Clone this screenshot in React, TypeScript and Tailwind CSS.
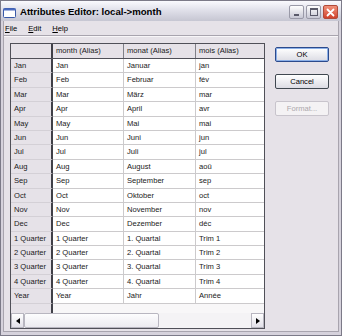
const rows = [
  ["Jan", "Jan", "Januar", "jan"],
  ["Feb", "Feb", "Februar", "fév"],
  ["Mar", "Mar", "März", "mar"],
  ["Apr", "Apr", "April", "avr"],
  ["May", "May", "Mai", "mai"],
  ["Jun", "Jun", "Juni", "jun"],
  ["Jul", "Jul", "Juli", "jul"],
  ["Aug", "Aug", "August", "aoû"],
  ["Sep", "Sep", "September", "sep"],
  ["Oct", "Oct", "Oktober", "oct"],
  ["Nov", "Nov", "November", "nov"],
  ["Dec", "Dec", "Dezember", "déc"],
  ["1 Quarter", "1 Quarter", "1. Quartal", "Trim 1"],
  ["2 Quarter", "2 Quarter", "2. Quartal", "Trim 2"],
  ["3 Quarter", "3 Quarter", "3. Quartal", "Trim 3"],
  ["4 Quarter", "4 Quarter", "4. Quartal", "Trim 4"],
  ["Year", "Year", "Jahr", "Année"],
]

function TitleButton({ kind }: { kind: "min" | "max" | "close" }) {
  if (kind === "close") {
    return (
      <div className="flex h-[14px] w-[15px] items-center justify-center rounded-[2px] border border-[#b04a3a] bg-gradient-to-b from-[#f0907a] to-[#d0402a]">
        <svg width="9" height="9" viewBox="0 0 9 9">
          <path d="M1.5 1.5l6 6M7.5 1.5l-6 6" stroke="#fff" strokeWidth="1.8" strokeLinecap="round" />
        </svg>
      </div>
    )
  }
  return (
    <div className="flex h-[14px] w-[15px] items-center justify-center rounded-[2px] border border-[#9a9aa8] bg-gradient-to-b from-[#ffffff] to-[#c8c8d4]">
      {kind === "min" ? (
        <div className="mt-[6px] h-[2px] w-[5px] bg-[#5a5a6a]" />
      ) : (
        <div className="h-[8px] w-[8px] border border-t-2 border-[#5a5a6a]" />
      )}
    </div>
  )
}

function Button({ label, primary, disabled }: { label: string; primary?: boolean; disabled?: boolean }) {
  return (
    <div
      className={
        disabled
          ? "flex h-[15px] w-[54px] items-center justify-center rounded-[2px] border border-[#c8c4cc] bg-[#f4f2f4] text-[7.6px] text-[#aca8ac]"
          : primary
          ? "flex h-[15px] w-[54px] items-center justify-center rounded-[2px] border border-[#2c4a8c] bg-gradient-to-b from-[#ffffff] to-[#dcdce4] text-[7.6px] text-black shadow-[inset_0_0_0_1px_#8cb0e8]"
          : "flex h-[15px] w-[54px] items-center justify-center rounded-[2px] border border-[#404850] bg-gradient-to-b from-[#ffffff] to-[#dcdce4] text-[7.6px] text-black"
      }
    >
      {label}
    </div>
  )
}

export default function App() {
  return (
    <div
      className="flex h-[336px] w-[342px] flex-col border border-[#7c7a88] bg-[#d6d2dc]"
      style={{ fontFamily: "'Liberation Sans', Arial, sans-serif" }}
    >
      {/* title bar */}
      <div className="flex h-[20px] shrink-0 items-center bg-gradient-to-b from-[#fafafe] via-[#dedee8] to-[#c6c6d2] pl-[2px] pr-[3px]">
        <svg width="13" height="10" viewBox="0 0 13 10" className="mt-[3px]">
          <rect x="0.5" y="0.5" width="12" height="9" rx="1" fill="#fff" stroke="#3a5aa8" />
          <rect x="0.5" y="0.5" width="12" height="2" fill="#4a6ac0" />
        </svg>
        <span className="ml-[4px] mt-[2px] text-[9.6px] font-bold text-black">Attributes Editor: local-&gt;month</span>
        <div className="ml-auto mt-[2px] flex gap-[2px]">
          <TitleButton kind="min" />
          <TitleButton kind="max" />
          <TitleButton kind="close" />
        </div>
      </div>

      {/* client */}
      <div className="mx-[2px] mb-[3px] flex flex-1 flex-col border-l border-r border-b border-[#a8a4ae] bg-[#e6e2e8]">
        {/* menu */}
        <div className="flex h-[14px] shrink-0 items-center gap-[11px] pl-[1px] pt-[2px] text-[7.6px] text-black">
          <span><span className="underline">F</span>ile</span>
          <span><span className="underline">E</span>dit</span>
          <span><span className="underline">H</span>elp</span>
        </div>
        <div className="h-[1px] bg-[#a8a4ae]" />
        <div className="h-[1px] bg-[#f8f6f8]" />

        <div className="flex flex-1 pl-[6px] pt-[6px]">
          {/* grid */}
          <div className="flex h-[286px] w-[255px] flex-col border border-[#505058] bg-[#f6f5f6] text-[7.6px] text-[#1a1a1a]">
            {/* header */}
            <div className="flex h-[15px] shrink-0 border-b border-[#505058] bg-[#e6e2e8]">
              <div className="w-[42px] border-r-2 border-[#404048]" />
              <div className="flex w-[71px] items-center border-r border-[#808088] pl-[3px]">month (Alias)</div>
              <div className="flex w-[72px] items-center border-r border-[#808088] pl-[3px]">monat (Alias)</div>
              <div className="flex w-[68px] items-center pl-[3px]">mois (Alias)</div>
            </div>
            {rows.map((r) => (
              <div key={r[0]} className="flex h-[14.4px] shrink-0">
                <div className="flex w-[42px] items-center border-r-2 border-b border-r-[#404048] border-b-[#d4d0d6] bg-[#e6e2e8] pl-[3px]">
                  {r[0]}
                </div>
                <div className="flex w-[71px] items-center border-r border-b border-[#cccacc] bg-white pl-[3px]">{r[1]}</div>
                <div className="flex w-[72px] items-center border-r border-b border-[#cccacc] bg-white pl-[3px]">{r[2]}</div>
                <div className="flex w-[68px] items-center border-b border-[#cccacc] bg-white pl-[3px]">{r[3]}</div>
              </div>
            ))}
            <div className="flex flex-1">
              <div className="w-[42px] border-r-2 border-[#404048] bg-[#e6e2e8]" />
              <div className="flex-1 bg-[#f8f7f8]" />
            </div>
            {/* scrollbar */}
            <div className="flex h-[15px] shrink-0 bg-[#f4f3f5]">
              <div className="flex w-[13px] items-center justify-center border border-[#b8b6c0] bg-gradient-to-b from-[#ffffff] to-[#e2e0e8]">
                <svg width="4" height="6" viewBox="0 0 4 6">
                  <path d="M4 0L0 3l4 3z" fill="#000" />
                </svg>
              </div>
              <div className="w-[135px] rounded-[2px] border border-[#b8b6c0] bg-gradient-to-b from-[#fdfdfe] to-[#ecebf0]" />
              <div className="flex-1" />
              <div className="flex w-[13px] items-center justify-center border border-[#b8b6c0] bg-gradient-to-b from-[#ffffff] to-[#e2e0e8]">
                <svg width="4" height="6" viewBox="0 0 4 6">
                  <path d="M0 0l4 3-4 3z" fill="#000" />
                </svg>
              </div>
            </div>
          </div>

          {/* buttons */}
          <div className="ml-[10px] flex flex-col gap-[12px] pt-[4px]">
            <Button label="OK" primary />
            <Button label="Cancel" />
            <Button label="Format..." disabled />
          </div>
        </div>
      </div>
    </div>
  )
}
